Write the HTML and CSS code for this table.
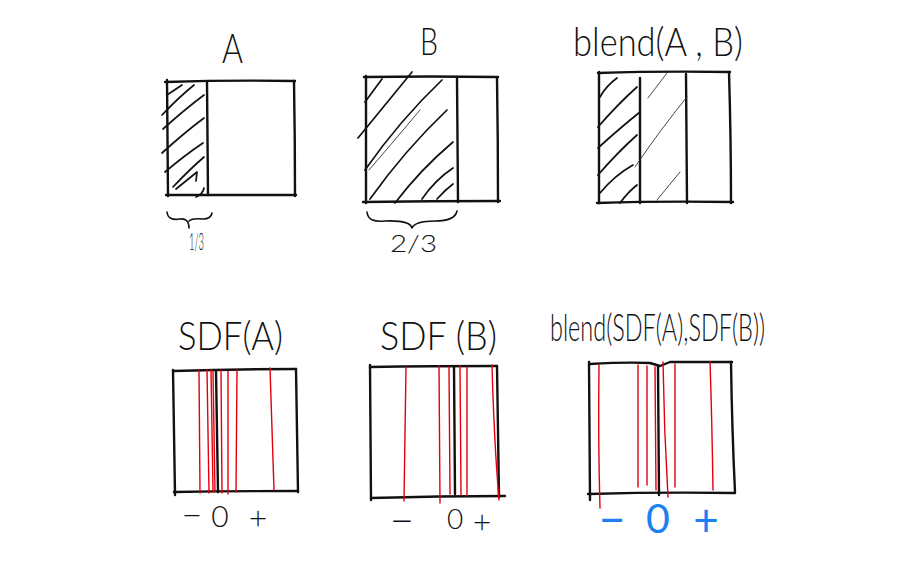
FILE: index.html
```html
<!DOCTYPE html>
<html lang="en">
<head>
<meta charset="utf-8">
<title>SDF blend sketch</title>
<link rel="stylesheet" href="styles.css">
</head>
<body>
<svg class="sheet" width="920" height="570" viewBox="0 0 920 570" xmlns="http://www.w3.org/2000/svg">
  <!-- Row 1: A -->
  <text class="hand" x="222" y="63" font-size="42" textLength="21" lengthAdjust="spacingAndGlyphs">A</text>
  <g class="ink">
    <path d="M165,82 Q230,80 295,81"/>
    <path d="M167,80 L168,196"/>
    <path d="M294,81 Q295,140 295,196"/>
    <path d="M166,195 L296,195"/>
    <path d="M207,82 L208,195"/>
  </g>
  <g class="hatch">
    <path d="M170,93 L167,95 M167,95 L182,85"/>
    <path d="M162,115 Q178,98 194,85"/>
    <path d="M163,129 Q184,110 204,95"/>
    <path d="M162,153 Q184,133 204,118"/>
    <path d="M165,172 Q185,155 203,143"/>
    <path d="M173,187 Q189,170 204,157"/>
    <path d="M176,189 L197,172 L196,181"/>
    <path d="M196,197 Q203,194 204,188"/>
  </g>
  <path class="brace" d="M167,212 Q168,221 180,219 Q189,218 189,228 M189,221 Q192,218 203,219 Q211,219 212,213"/>
  <text class="hand" x="189" y="250" font-size="24" textLength="15" lengthAdjust="spacingAndGlyphs">1/3</text>

  <!-- Row 1: B -->
  <text class="hand" x="420" y="55" font-size="38" textLength="18" lengthAdjust="spacingAndGlyphs">B</text>
  <g class="ink">
    <path d="M364,77 Q430,76 498,77"/>
    <path d="M366,76 L366,203"/>
    <path d="M457,77 L458,202"/>
    <path d="M497,78 Q498,140 498,202"/>
    <path d="M363,202 Q430,201 500,201"/>
  </g>
  <g class="hatch">
    <path d="M365,102 L382,79"/>
    <path d="M358,138 Q385,105 412,72"/>
    <path d="M365,170 Q400,120 442,80"/>
    <path d="M370,199 Q405,150 447,110"/>
    <path d="M395,203 Q420,170 453,142"/>
    <path d="M422,199 Q435,180 453,168"/>
    <path d="M437,199 Q445,190 453,184"/>
  </g>
  <path class="thin" d="M369,170 Q395,140 420,110"/>
  <path class="brace" d="M367,212 Q368,223 385,221 Q410,220 412,228 M412,228 Q415,221 435,221 Q455,221 457,211"/>
  <text class="hand" x="390" y="252" font-size="24" textLength="47" lengthAdjust="spacingAndGlyphs">2/3</text>

  <!-- Row 1: blend(A, B) -->
  <text class="hand" x="573" y="56" font-size="40" textLength="170" lengthAdjust="spacingAndGlyphs">blend(A , B)</text>
  <g class="ink">
    <path d="M598,73 Q660,71 730,72"/>
    <path d="M599,72 L599,203"/>
    <path d="M640,78 L640,203"/>
    <path d="M686,74 L687,203"/>
    <path d="M729,72 Q731,140 731,203"/>
    <path d="M597,203 Q660,201 733,202"/>
  </g>
  <g class="hatch">
    <path d="M600,97 Q606,86 617,78"/>
    <path d="M598,127 Q617,105 637,87"/>
    <path d="M598,148 Q620,128 640,112"/>
    <path d="M598,175 Q617,153 637,135"/>
    <path d="M600,193 Q615,175 633,165"/>
    <path d="M620,203 Q628,192 637,185"/>
  </g>
  <g class="thin">
    <path d="M648,98 L667,73"/>
    <path d="M635,167 Q660,130 687,97"/>
    <path d="M657,200 L680,172"/>
  </g>

  <!-- Row 2: SDF(A) -->
  <text class="hand" x="178" y="350" font-size="40" textLength="105" lengthAdjust="spacingAndGlyphs">SDF(A)</text>
  <g class="ink">
    <path d="M173,371 Q235,369 296,369"/>
    <path d="M173,370 L175,495"/>
    <path d="M296,369 L298,492"/>
    <path d="M174,492 Q235,491 298,491"/>
    <path d="M216,371 L218,492"/>
  </g>
  <g class="red">
    <path d="M199,370 L200,493"/>
    <path d="M207,370 L209,493"/>
    <path d="M211,370 L213,492"/>
    <path d="M213,371 L215,492"/>
    <path d="M221,370 L222,493"/>
    <path d="M228,371 L228,494"/>
    <path d="M237,370 L236,492"/>
    <path d="M270,368 Q272,430 274,490"/>
  </g>
  <text class="hand sign" x="192" y="528" font-size="36">−</text>
  <text class="hand sign" x="220" y="527" font-size="30">0</text>
  <text class="hand sign" x="258" y="529" font-size="32">+</text>

  <!-- Row 2: SDF(B) -->
  <text class="hand" x="380" y="350" font-size="40" textLength="117" lengthAdjust="spacingAndGlyphs">SDF (B)</text>
  <g class="ink">
    <path d="M370,367 Q430,366 497,366"/>
    <path d="M370,365 L371,500"/>
    <path d="M497,366 Q498,430 499,497"/>
    <path d="M371,498 Q440,496 505,496"/>
    <path d="M454,367 L455,494"/>
  </g>
  <g class="red">
    <path d="M406,367 Q405,430 404,501"/>
    <path d="M439,366 L440,503"/>
    <path d="M449,367 L450,494"/>
    <path d="M460,366 L461,495"/>
    <path d="M467,367 L467,496"/>
    <path d="M492,365 Q494,440 499,500"/>
  </g>
  <text class="hand sign" x="402" y="535" font-size="42">−</text>
  <text class="hand sign" x="455" y="529" font-size="28">0</text>
  <text class="hand sign" x="482" y="533" font-size="32">+</text>

  <!-- Row 2: blend(SDF(A), SDF(B)) -->
  <text class="hand" x="550" y="341" font-size="37" textLength="215" lengthAdjust="spacingAndGlyphs">blend(SDF(A),SDF(B))</text>
  <g class="ink">
    <path d="M590,364 Q625,362 650,363 L660,366 L670,362 L732,362"/>
    <path d="M589,362 L590,500"/>
    <path d="M731,362 Q732,430 735,492"/>
    <path d="M588,494 Q660,492 735,493"/>
    <path d="M658,366 L659,495"/>
  </g>
  <g class="red">
    <path d="M599,365 Q598,440 600,508"/>
    <path d="M638,365 L638,487"/>
    <path d="M647,366 L647,485"/>
    <path d="M655,367 L656,490"/>
    <path d="M663,362 Q664,430 668,497"/>
    <path d="M675,364 L675,487"/>
    <path d="M710,362 Q712,420 713,490"/>
  </g>
  <text class="hand sign blue" x="612" y="536" font-size="46">−</text>
  <text class="hand sign blue" x="658" y="533" font-size="41">0</text>
  <text class="hand sign blue" x="706" y="536" font-size="44">+</text>
</svg>
</body>
</html>
```

FILE: styles.css
```css
html, body {
  margin: 0;
  padding: 0;
  background: #ffffff;
}

.sheet {
  display: block;
  width: 920px;
  height: 570px;
}

.hand {
  font-family: "Lato", "DejaVu Sans", sans-serif;
  font-weight: 300;
  fill: #111111;
}

.sign {
  text-anchor: middle;
}

.blue {
  fill: #1c7ff2;
  font-weight: 400;
}

.ink path,
.hatch path,
.brace,
.thin path,
.thin,
.red path {
  fill: none;
  stroke-linecap: round;
  stroke-linejoin: round;
}

.ink path {
  stroke: #111111;
  stroke-width: 2.4;
}

.hatch path {
  stroke: #111111;
  stroke-width: 1.7;
}

.brace {
  stroke: #111111;
  stroke-width: 1.6;
}

.thin path,
.thin {
  stroke: #333333;
  stroke-width: 0.9;
}

.red path {
  stroke: #e3000f;
  stroke-width: 1.4;
}
```
